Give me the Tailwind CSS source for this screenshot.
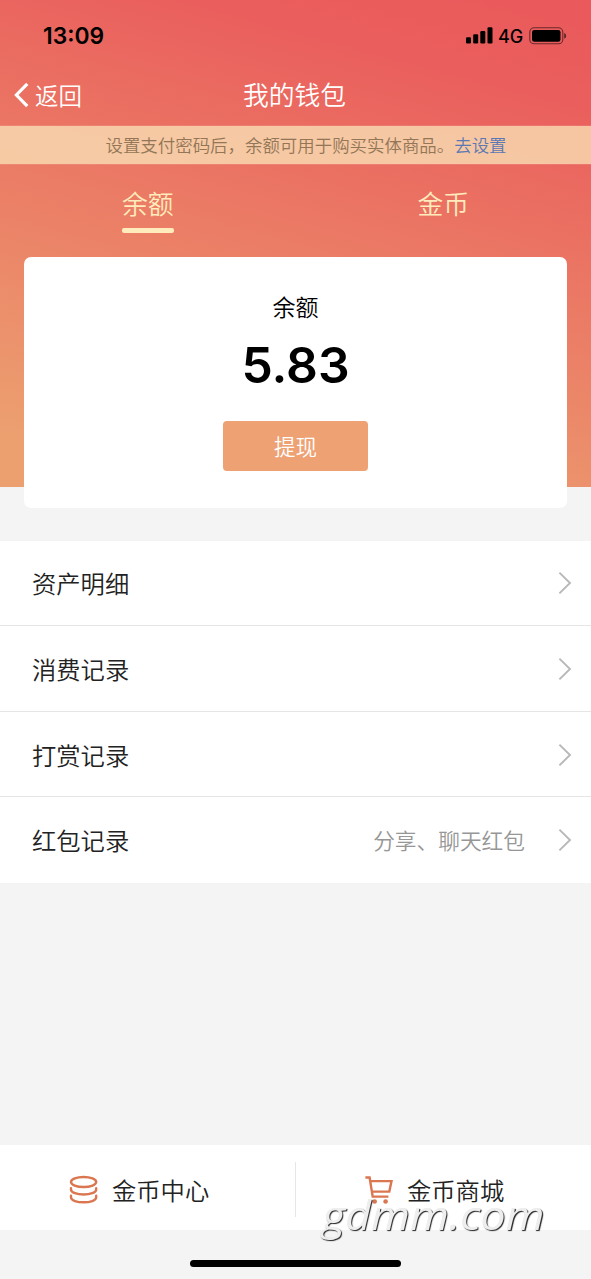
<!DOCTYPE html>
<html lang="zh-CN">
<head>
<meta charset="utf-8">
<meta name="viewport" content="width=device-width, initial-scale=1">
<title>我的钱包</title>
<script src="https://cdn.jsdelivr.net/npm/@tailwindcss/browser@4"></script>
</head>
<body class="bg-[#f4f4f4] font-['Noto_Sans_CJK_SC',sans-serif] font-[350] text-[#222]">
<div class="relative flex h-[1279px] w-[591px] flex-col overflow-hidden">
  <header class="h-[487px] shrink-0 bg-[linear-gradient(195deg,#ea5a5c_4%,#ea5f5d_17%,#eca070_92%)]">
    <!-- status bar -->
    <div class="flex h-[65px] items-center justify-between pt-[6px] pr-6 pl-[43px] text-black">
      <span class="font-['Inter',sans-serif] text-[22.8px] leading-[28px] font-semibold">13:09</span>
      <div class="flex items-center">
        <svg class="h-[17px] w-[27px]" viewBox="0 0 27 17"><rect x="0" y="10.2" width="5" height="6.3" rx="1.2"/><rect x="7.2" y="7.2" width="5" height="9.3" rx="1.2"/><rect x="14.3" y="4" width="5" height="12.5" rx="1.2"/><rect x="21.5" y="0.2" width="5" height="16.3" rx="1.2"/></svg>
        <span class="mt-[2px] ml-[5px] w-[31px] font-['Inter',sans-serif] text-[18px] leading-[24px] font-medium">4G</span>
        <svg class="h-[18px] w-[38px]" viewBox="0 0 38 18"><rect x="0.8" y="0.8" width="33" height="16" rx="4.4" fill="none" stroke="#000" stroke-opacity=".55" stroke-width="1.1"/><rect x="3" y="3" width="28.5" height="11.8" rx="2.3"/><path d="M35.2 6.1q2 .8 2 2.8t-2 2.8z" fill-opacity=".6"/></svg>
      </div>
    </div>
    <!-- navigation bar -->
    <div class="grid h-[60px] grid-cols-[1fr_auto_1fr] items-center text-white">
      <div class="flex items-center pl-[14px]">
        <svg class="h-[26px] w-[15px]" viewBox="0 0 15 26" fill="none" stroke="#fff" stroke-width="3.2"><path d="M13.3 1.8 2.4 13l10.9 11.2"/></svg>
        <span class="ml-[6px] text-[23.5px] leading-[34px]">返回</span>
      </div>
      <h1 class="-mt-[2px] pr-[2px] text-[25.8px] leading-[34px] font-[350]">我的钱包</h1>
      <span></span>
    </div>
    <!-- notice -->
    <div class="flex h-[40px] items-center justify-center border-y border-white/10 bg-[#f8e2b6]/78 bg-clip-padding pl-[21px] text-[17.45px] leading-[26px] text-[#927657]">
      <span>设置支付密码后，余额可用于购买实体商品。</span><span class="text-[#5b78b3]">去设置</span>
    </div>
    <!-- tabs -->
    <div class="grid h-[92px] grid-cols-2 text-[25.8px] leading-[34px] text-[#ffebbb]">
      <div class="flex flex-col items-center pt-[21px]"><span>余额</span><i class="mt-[8px] h-[5px] w-[52px] rounded-[2px] bg-[#ffebbb]"></i></div>
      <div class="flex flex-col items-center pt-[21px]"><span>金币</span></div>
    </div>
    <!-- balance card -->
    <div class="mx-6 flex h-[251px] flex-col items-center rounded-[7px] bg-white text-black">
      <span class="mt-[32px] text-[23px] leading-[34px]">余额</span>
      <span class="mt-[13px] font-['Inter',sans-serif] text-[49.8px] leading-[58px] font-semibold">5.83</span>
      <button class="mt-[27px] h-[50px] w-[145px] rounded-[4px] bg-[#eea172] text-[21.5px] leading-[50px] font-[350] text-white">提现</button>
    </div>
  </header>
  <main class="mt-[54px] flex flex-col bg-white text-[24.3px] leading-[36px]">
    <div class="flex h-[85px] items-center border-b border-[#e5e5e5] pr-[19px] pl-[32px]"><span class="grow">资产明细</span><svg class="h-[24px] w-[14px]" viewBox="0 0 14 24" fill="none" stroke="#b8b8b8" stroke-width="1.9"><path d="m1.4 1.6 10.6 10.4L1.4 22.4"/></svg></div>
    <div class="flex h-[86px] items-center border-b border-[#e5e5e5] pr-[19px] pl-[32px]"><span class="grow">消费记录</span><svg class="h-[24px] w-[14px]" viewBox="0 0 14 24" fill="none" stroke="#b8b8b8" stroke-width="1.9"><path d="m1.4 1.6 10.6 10.4L1.4 22.4"/></svg></div>
    <div class="flex h-[85px] items-center border-b border-[#e5e5e5] pt-px pr-[19px] pl-[32px]"><span class="grow">打赏记录</span><svg class="h-[24px] w-[14px]" viewBox="0 0 14 24" fill="none" stroke="#b8b8b8" stroke-width="1.9"><path d="m1.4 1.6 10.6 10.4L1.4 22.4"/></svg></div>
    <div class="flex h-[86px] items-center pr-[19px] pl-[32px]"><span class="grow">红包记录</span><span class="mr-[33px] text-[21.7px] text-[#969696]">分享、聊天红包</span><svg class="h-[24px] w-[14px]" viewBox="0 0 14 24" fill="none" stroke="#b8b8b8" stroke-width="1.9"><path d="m1.4 1.6 10.6 10.4L1.4 22.4"/></svg></div>
  </main>
  <footer class="mt-auto flex h-[134px] shrink-0 flex-col items-center">
    <div class="grid h-[85px] w-full grid-cols-[295px_1px_295px] items-center bg-white text-[24.3px] leading-[36px]">
      <div class="flex items-center pt-[5px] pl-[69px]">
        <svg class="h-[30px] w-[30px]" viewBox="0 0 30 30" fill="none" stroke="#da7650" stroke-width="2.4" stroke-linecap="round"><ellipse cx="14.6" cy="7" rx="12.6" ry="5"/><path d="M2 13.2v1.2c0 6.8 25.2 6.8 25.2 0v-1.2M2 20.8v1.4c0 6.8 25.2 6.8 25.2 0v-1.4"/></svg>
        <span class="ml-[13px]">金币中心</span>
      </div>
      <i class="mt-[4px] h-[55px] bg-[#e6e6e6]"></i>
      <div class="flex items-center pt-[5px] pl-[69px]">
        <svg class="h-[30px] w-[30px]" viewBox="0 0 30 30" fill="none" stroke="#da7650" stroke-width="2.4"><path d="M.4 2.5h4.2l3.1 19.1H23.4M5.3 6.1h21.2l-2.2 10.5H7"/><g fill="#da7650" stroke="none"><circle cx="9.7" cy="26.5" r="2.3"/><circle cx="20.6" cy="26.5" r="2.3"/></g></svg>
        <span class="ml-[12px]">金币商城</span>
      </div>
    </div>
    <div class="mt-[30px] h-[7px] w-[211px] rounded-full bg-black"></div>
  </footer>
  <!-- site watermark -->
  <div class="absolute top-[1191px] left-[322px] origin-left scale-x-[1.09] font-['Open_Sans',sans-serif] text-[41px] leading-[46px] whitespace-nowrap text-[#eeeeee] italic font-normal antialiased will-change-transform [text-shadow:1px_1px_1px_#222]">gdmm.com</div>
</div>
</body>
</html>
